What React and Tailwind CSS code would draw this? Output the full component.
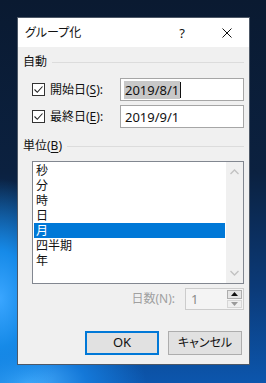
import React from "react";

const Check = () => (
  <div className="w-[13px] h-[13px] border border-[#333333] bg-white flex items-center justify-center shrink-0">
    <svg width="11" height="11" viewBox="0 0 11 11">
      <path d="M1.5 5.5 L4.3 8.3 L9.5 2.5" fill="none" stroke="#222" strokeWidth="1.1" />
    </svg>
  </div>
);

const Header = ({ children, mt }) => (
  <div className={`flex items-center gap-[5px] h-[14px] ${mt}`}>
    <span className="text-[12px] leading-[14px] text-[#111]">{children}</span>
    <div className="flex-1 h-px bg-[#dcdcdc]" />
  </div>
);

const items = ["秒", "分", "時", "日", "月", "四半期", "年"];

export default function App() {
  return (
    <div className="w-[266px] h-[383px] overflow-hidden pt-[17px] pl-[17px] font-['Noto_Sans','Noto_Sans_CJK_JP',sans-serif] [font-feature-settings:'palt'] bg-[radial-gradient(ellipse_70px_120px_at_0%_78%,#3aa6ff_0%,#168ae8_40%,transparent_100%),radial-gradient(ellipse_120px_60px_at_10%_100%,#4ab0ff_0%,#1478d8_50%,transparent_100%),linear-gradient(180deg,#0a1a31_0%,#0b2140_45%,#0b3a78_75%,#0c56ad_100%)]">
      <div className="w-[233px] h-[348px] border border-[#4d5867] flex flex-col bg-[#f0f0f0]">
        {/* title bar */}
        <div className="h-[29px] bg-white flex items-center shrink-0">
          <span className="pl-[7px] flex-1 text-[12px] leading-[14px] text-[#111]">グループ化</span>
          <span className="w-[10px] text-center text-[13px] leading-[14px] text-[#111]">?</span>
          <svg className="ml-[35px] mr-[17px]" width="10" height="10" viewBox="0 0 10 10">
            <path d="M0.5 0.5 L9.5 9.5 M9.5 0.5 L0.5 9.5" stroke="#111" strokeWidth="1" fill="none" />
          </svg>
        </div>
        {/* body */}
        <div className="flex-1 flex flex-col px-[5px]">
          <Header mt="mt-[8px]">自動</Header>
          <div className="mt-[9px] flex flex-col gap-[4px] pl-[9px]">
            <div className="flex items-center h-[23px]">
              <Check />
              <span className="ml-[5px] flex-1 text-[12px] leading-[14px] text-[#111]">
                開始日(<span className="underline underline-offset-2">S</span>):
              </span>
              <div className="w-[124px] h-[23px] border border-[#a6a6a6] bg-white flex items-center pl-[3px]">
                <span className="bg-[#c8c8c8] text-[13px] leading-[18px] text-[#111] px-[1px]">2019/8/1</span>
                <span className="w-px h-[16px] bg-[#111]" />
              </div>
            </div>
            <div className="flex items-center h-[23px]">
              <Check />
              <span className="ml-[5px] flex-1 text-[12px] leading-[14px] text-[#111]">
                最終日(<span className="underline underline-offset-2">E</span>):
              </span>
              <div className="w-[124px] h-[23px] border border-[#a6a6a6] bg-white flex items-center pl-[4px]">
                <span className="text-[13px] leading-[18px] text-[#111]">2019/9/1</span>
              </div>
            </div>
          </div>
          <Header mt="mt-[11px]">
            単位(<span className="underline underline-offset-2">B</span>)
          </Header>
          <div className="mt-[8px] ml-[9px] h-[123px] border border-[#828790] bg-white flex">
            <div className="flex-1 pt-[1px] px-[1px] flex flex-col">
              {items.map((it) => (
                <div
                  key={it}
                  className={`h-[15px] leading-[15px] text-[12px] pl-[2px] ${
                    it === "月" ? "bg-[#0078d7] text-white" : "text-[#111]"
                  }`}
                >
                  {it}
                </div>
              ))}
            </div>
            <div className="w-[17px] bg-[#f0f0f0] flex flex-col justify-between items-center py-[7px]">
              <svg width="9" height="6" viewBox="0 0 9 6">
                <path d="M0.5 5 L4.5 1 L8.5 5" stroke="#c2c2c2" strokeWidth="1.3" fill="none" />
              </svg>
              <svg width="9" height="6" viewBox="0 0 9 6">
                <path d="M0.5 1 L4.5 5 L8.5 1" stroke="#c2c2c2" strokeWidth="1.3" fill="none" />
              </svg>
            </div>
          </div>
          <div className="mt-[4px] h-[22px] flex items-center justify-end gap-[10px]">
            <span className="text-[12px] leading-[14px] text-[#a0a0a0]">日数(N):</span>
            <div className="w-[59px] h-[22px] border border-[#cccccc] bg-[#f4f4f4] flex">
              <span className="flex-1 pl-[5px] text-[13px] leading-[20px] text-[#8a8a8a]">1</span>
              <div className="w-[17px] flex flex-col p-[1px] gap-[1px]">
                <div className="flex-1 border border-[#adadad] bg-[#e5e5e5] flex items-center justify-center">
                  <svg width="7" height="4" viewBox="0 0 7 4"><path d="M0 4 L3.5 0 L7 4 Z" fill="#111" /></svg>
                </div>
                <div className="flex-1 border border-[#d6d6d6] bg-[#efefef] flex items-center justify-center">
                  <svg width="7" height="4" viewBox="0 0 7 4"><path d="M0 0 L7 0 L3.5 4 Z" fill="#9a9a9a" /></svg>
                </div>
              </div>
            </div>
          </div>
          <div className="mt-[21px] flex justify-end gap-[9px] pr-[2px]">
            <div className="w-[74px] h-[24px] border-2 border-[#0078d7] bg-[#e1e1e1] flex items-center justify-center text-[13px] text-[#111]">
              OK
            </div>
            <div className="w-[74px] h-[24px] border border-[#adadad] bg-[#e1e1e1] flex items-center justify-center text-[12px] text-[#111]">
              キャンセル
            </div>
          </div>
        </div>
      </div>
    </div>
  );
}
